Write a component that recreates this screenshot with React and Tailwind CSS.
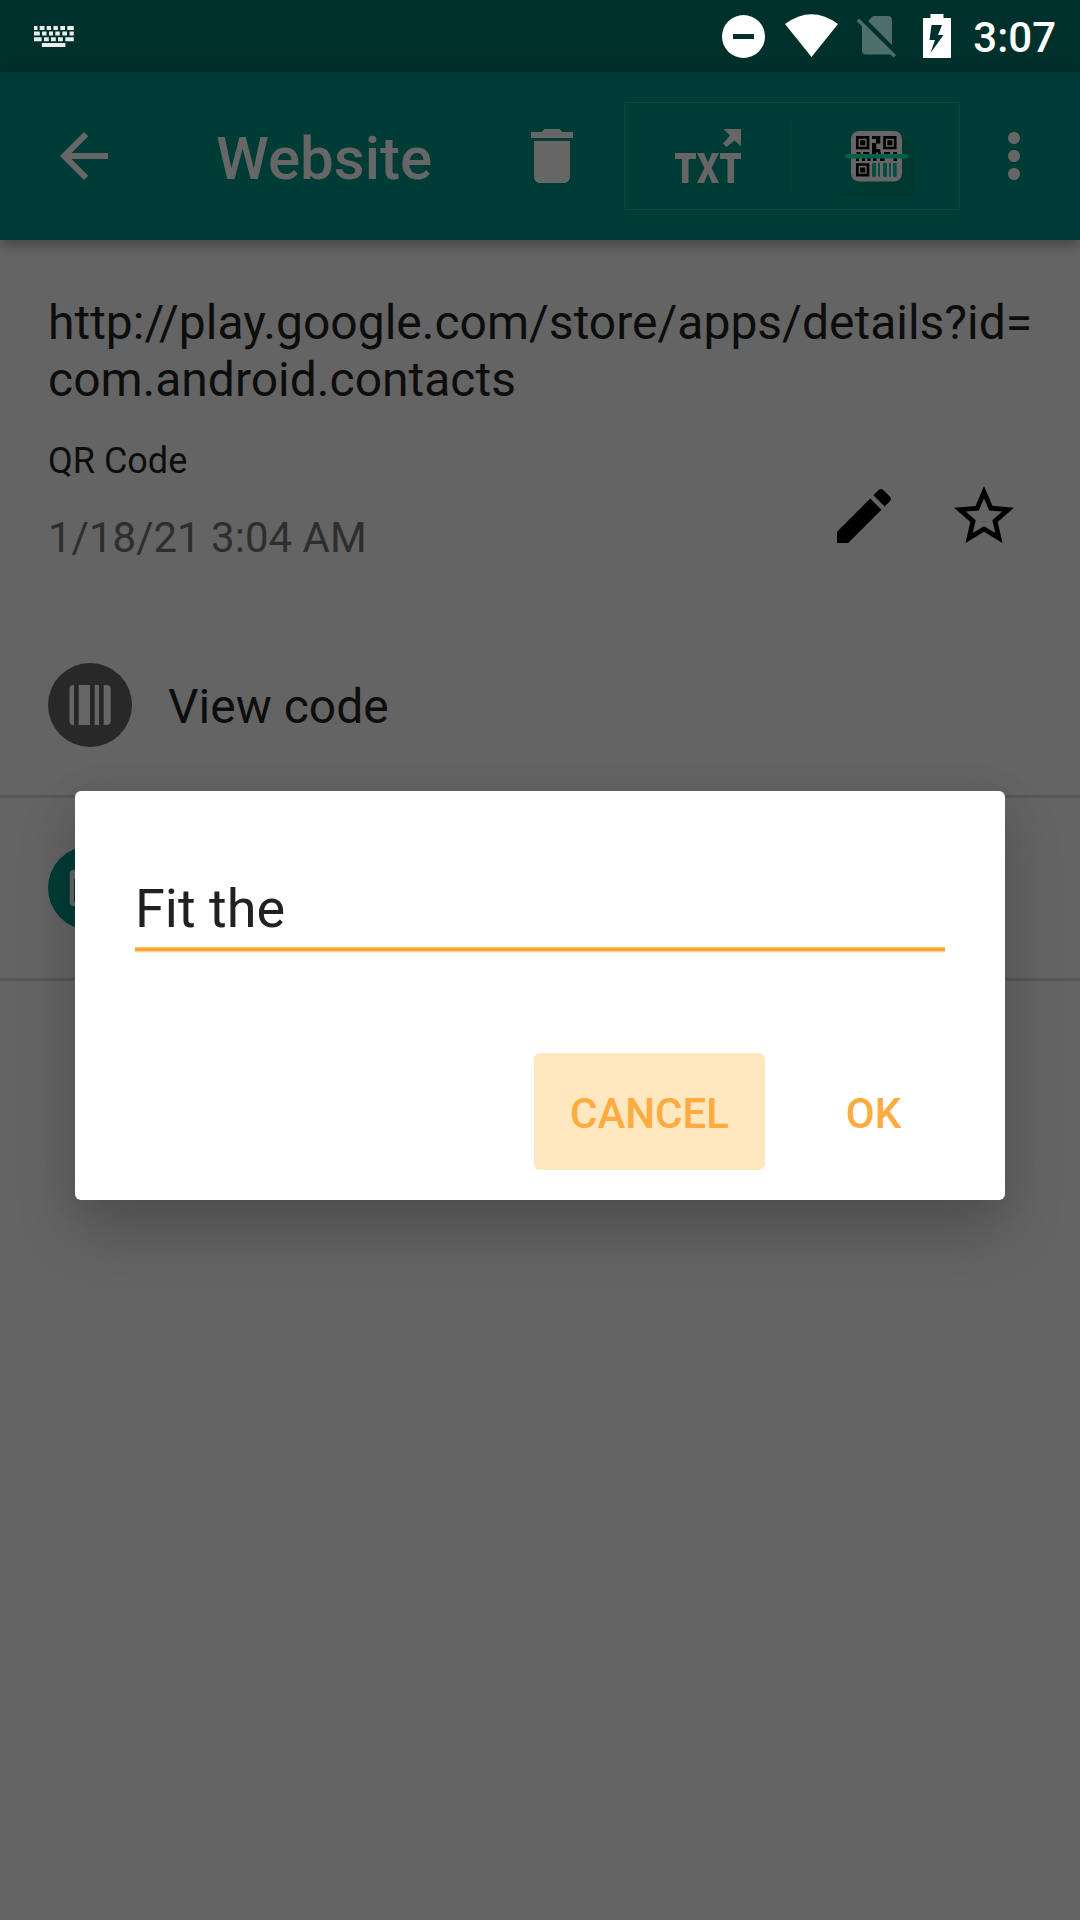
function StatusBar() {
  return (
    <header className="flex h-[72px] w-full items-start bg-[#00302b]">
      <svg className="ml-[33px] mt-[24px] h-[25px] w-[43px] shrink-0" viewBox="33 24 43 25" fill="#e9eeed">
        <path d="M34 26h3.500v4H34zM39.700 26h4.800v4h-4.800zM46.700 26h4.300v4h-4.300zM53.400 26h4.500v4h-4.500zM60.300 26h4.700v4h-4.700zM67.300 26h6.500v4h-6.500zM34 31.600h5.800v4H34zM42 31.600h4.500v4H42zM49 31.600h4v4h-4zM55.300 31.600h4.500v4h-4.500zM62.300 31.600h4.700v4h-4.700zM69.600 31.600h4.200v4h-4.200zM34 37.300h7.600v4H34zM44 37.300h4.800v4H44zM51 37.300h4.800v4H51zM58 37.300h4.800v4H58zM65.300 37.300h8.500v4h-8.500zM41.900 43h23.500v4H41.900z" />
      </svg>
      <div className="flex-1" />
      <svg className="h-[72px] w-[240px] shrink-0" viewBox="720 0 240 72" fill="#fff">
        <path fillRule="evenodd" d="M743.500 15a21.500 21.500 0 1 0 0 43a21.500 21.500 0 0 0 0-43zM733 34v5h21v-5z" />
        <path d="M785 24q26.500-19.500 53 0L811.500 57z" />
        <g fill="#4d6e6b">
          <path d="M868 21l5-5h15q4 0 4 4v25zM862 25.500l30 29h-26q-4 0-4-4z" />
          <path d="M856.500 21l2.500-2.500 37 36.500-2.500 2.500z" />
        </g>
        <path fillRule="evenodd" d="M923 18h7.500v-4h13v4h7.500v40h-28zM931.500 25l-2 15h5.500l-4.500 13 13-18h-5.500l4-10z" />
      </svg>
      <span className="ml-[13px] mr-[24px] mt-[13px] text-[42px] font-medium leading-[50px] text-white">3:07</span>
    </header>
  );
}

function Toolbar() {
  return (
    <div className="relative flex h-[168px] w-full items-center bg-[#003c36] shadow-[0_5px_12px_rgba(0,0,0,0.3)]">
      <svg className="ml-[48px] h-[72px] w-[72px] shrink-0" viewBox="0 0 24 24" fill="#666">
        <path d="M20 11H7.830l5.590-5.590L12 4l-8 8 8 8 1.410-1.410L7.830 13H20v-2z" />
      </svg>
      <h1 className="ml-[96px] w-[300px] pt-[6px] text-[60px] font-medium leading-[70px] text-[#666]">Website</h1>
      <svg className="h-[72px] w-[72px] shrink-0" viewBox="0 0 24 24" fill="#666">
        <path d="M6 19c0 1.100.9 2 2 2h8c1.100 0 2-.9 2-2V7H6v12zM19 4h-3.500l-1-1h-5l-1 1H5v2h14V4z" />
      </svg>
      <div className="ml-[36px] flex h-[108px] w-[336px] items-center border border-[#12443f]">
        <svg className="h-[106px] w-[166px]" viewBox="625 103 166 106">
          <path fill="#666" d="M723.500 129H741v17.500l-6.500-6-8 6.500-3.500-3.500 7-8z" />
          <path fill="#666" d="M675 153h21v6h-7.500v24h-6.500v-24h-7zM720 153h21v6h-7v24h-6.500v-24h-7.500zM697 153h7l4 9.500 4-9.500h7l-7.500 15 7.500 15h-7l-4-9.500-4 9.500h-7l7.500-15z" />
        </svg>
        <div className="h-[72px] w-px bg-[#09403a]" />
        <QrBadge />
      </div>
      <svg className="ml-[18px] h-[72px] w-[72px] shrink-0" viewBox="0 0 24 24" fill="#666">
        <path d="M12 8c1.100 0 2-.9 2-2s-.9-2-2-2-2 .9-2 2 .9 2 2 2zm0 2c-1.100 0-2 .9-2 2s.9 2 2 2 2-.9 2-2-.9-2-2-2zm0 6c-1.100 0-2 .9-2 2s.9 2 2 2 2-.9 2-2-.9-2-2-2z" />
      </svg>
    </div>
  );
}

function QrBadge() {
  return (
    <svg className="h-[106px] w-[166px]" viewBox="792 103 166 106">
      <rect x="838" y="121" width="76" height="75" rx="6" fill="#003530" />
      <rect x="838" y="119" width="76" height="74" rx="6" fill="#003b35" />
      <path d="M900 134l14 14v39q0 6-6 6h-41l-14-14z" fill="#003731" />
      <rect x="851" y="131" width="51" height="50.500" rx="8" fill="#666" />
      <path fill="none" stroke="#000" strokeWidth="2.700" d="M857.300 137.300h10.700v10.700h-10.700zM884.500 137.300h10.700v10.700h-10.700zM857.300 164.500h10.700v10.700h-10.700z" />
      <path
        fill="#000"
        d="M860.200 140.200h5v5h-5zM887.400 140.200h5v5h-5zM860.200 167.400h5v5h-5zM872 136h8.300v7.500h-4v5.500h4v3.500h-8.300v-9.500h4v-4h-4zM856.500 152h4v5h-4zM863 152h6.300v5h-6.300zM872 152.500h4v4.500h-4zM878 152.500h3v4.500h-3zM884 152h6v5h-6zM893 152h4v5h-4zM856 158h3v3h-3zM862 158h3v3h-3zM867.500 158h3v3h-3zM873 158h3.500v3h-3.500zM880 158h4.500v3h-4.500zM893.500 158h3.500v3h-3.500z"
      />
      <path d="M872 163h4v13.700h-4zM878 163h2v13.700h-2zM883 163h4v13.700h-4zM889 163h2v13.700h-2zM893 163h3.700v13.700h-3.700z" fill="#004d45" />
      <rect x="845" y="154" width="63" height="4.600" rx="2.300" fill="#00604a" />
    </svg>
  );
}

function Details() {
  return (
    <section className="px-[48px] pt-[54px]">
      <p className="w-[1020px] text-[48px] leading-[57px] text-[#0d0d0d]">
        http://play.google.com/store/apps/details?id=
        <br />
        com.android.contacts
      </p>
      <div className="flex h-[135px]">
        <div className="flex-1">
          <p className="mt-[32px] text-[36px] leading-[42px] text-[#0d0d0d]">QR Code</p>
          <p className="mt-[31px] text-[42px] leading-[50px] text-[#2e2e2e]">1/18/21 3:04 AM</p>
        </div>
        <svg className="mt-[72px] h-[72px] w-[72px]" viewBox="0 0 24 24" fill="#000">
          <path d="M3 17.250V21h3.750L17.810 9.940l-3.750-3.750L3 17.250zM20.710 7.040c.39-.39.39-1.020 0-1.410l-2.340-2.340c-.39-.39-1.020-.39-1.410 0l-1.830 1.830 3.750 3.750 1.830-1.830z" />
        </svg>
        <svg className="ml-[48px] mr-[12px] mt-[72px] h-[72px] w-[72px]" viewBox="0 0 24 24" fill="#000">
          <path d="M22 9.240l-7.190-.62L12 2 9.190 8.630 2 9.240l5.460 4.730L5.820 21 12 17.270 18.180 21l-1.630-7.030L22 9.240zM12 15.400l-3.760 2.270 1-4.280-3.320-2.880 4.380-.38L12 6.100l1.710 4.040 4.380.38-3.320 2.880 1 4.280L12 15.400z" />
        </svg>
      </div>
    </section>
  );
}

function Actions() {
  return (
    <section className="mt-[72px]">
      <div className="flex h-[183px] items-center border-b-[3px] border-[#575757] px-[48px]">
        <svg className="h-[84px] w-[84px]" viewBox="48 663 84 84">
          <circle cx="90" cy="705" r="42" fill="#282828" />
          <path fill="#666" d="M74 685v40h-.5q-4 0-4-4v-32q0-4 4-4zM78.700 685H90v40H78.700zM94.700 685H99v40h-4.300zM103.700 685h2.500q4.500 0 4.500 4v32q0 4-4.500 4h-2.500z" />
        </svg>
        <span className="ml-[36px] pt-[3px] text-[48px] leading-[56px] text-[#0d0d0d]">View code</span>
      </div>
      <div className="flex h-[183px] items-center border-b-[3px] border-[#575757] px-[48px]">
        <svg className="h-[84px] w-[84px]" viewBox="48 846 84 84">
          <circle cx="90" cy="888" r="42" fill="#003c36" />
          <path fillRule="evenodd" fill="#666" d="M73.700 869.700h32.600q4 0 4 4v28.300q0 4-4 4H73.700q-4 0-4-4v-28.300q0-4 4-4zM74 879v23h32v-23z" />
        </svg>
      </div>
    </section>
  );
}

function Dialog() {
  return (
    <div role="dialog" className="absolute left-[75px] top-[791px] flex h-[409px] w-[930px] flex-col rounded-[6px] bg-white shadow-[0_32px_60px_rgba(0,0,0,0.2),0_0_40px_rgba(0,0,0,0.06)]">
      <div className="mx-[60px] mt-[86px] h-[70px] text-[54px] leading-[64px] text-[#212121]">Fit the</div>
      <div className="mx-[60px] h-[6px] bg-[linear-gradient(#ffc26e_0_1px,#ffab40_1px_2px,#ff9d1d_2px_3px,#ffab40_3px_4px,#ffd08f_4px_5px,#fff0d8_5px)]" />
      <div className="mr-[67px] mt-[100px] flex justify-end gap-[44px]">
        <button className="h-[117px] w-[231px] rounded-[6px] bg-[#ffe7c0] pt-[3px] text-[42px] font-medium text-[#ffab40]">CANCEL</button>
        <button className="h-[117px] w-[129px] rounded-[6px] pt-[3px] text-[42px] font-medium text-[#ffab40]">OK</button>
      </div>
    </div>
  );
}

export default function App() {
  return (
    <main className="relative h-[1920px] w-[1080px] overflow-hidden bg-[#646464] font-['Roboto',sans-serif]">
      <StatusBar />
      <Toolbar />
      <Details />
      <Actions />
      <Dialog />
    </main>
  );
}
